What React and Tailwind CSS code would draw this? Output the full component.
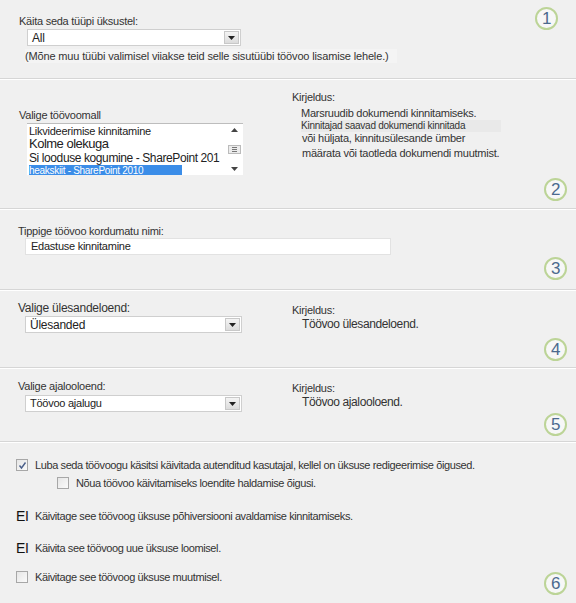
import React from 'react';

const font = { fontFamily: '"Liberation Sans", Arial, sans-serif' };

// numbered step marker
const Step = ({ n }) => (
    <div className="w-[23px] h-[23px] rounded-full border-2 border-[#bcd497] bg-[#f7f7f7] flex items-center justify-center text-[17px] leading-none text-[#4b6a8e]">
        {n}
    </div>
);

const DropArrow = () => (
    <div className="w-[15px] h-[13px] mr-[1px] border border-[#c8c8c8] bg-gradient-to-b from-[#f4f4f4] to-[#dcdcdc] flex items-center justify-center">
        <svg width="7" height="4" viewBox="0 0 7 4"><path d="M0 0h7L3.5 4z" fill="#222" /></svg>
    </div>
);

const Select = ({ children, className = "" }) => (
    <div className={`h-[17px] bg-white border border-[#cfcfcf] flex items-center justify-between ${className}`}>
        <div className="pl-[4px] text-[#222] leading-none">{children}</div>
        <DropArrow />
    </div>
);

const Box = ({ checked }) => (
    <div className="w-[12px] h-[12px] border border-[#a7a7a7] bg-gradient-to-br from-[#e6e6e6] to-[#fafafa] flex items-center justify-center shrink-0">
        {checked && (
            <svg width="9" height="9" viewBox="0 0 9 9"><path d="M1.5 4.5l2 2.5 4-5.5" stroke="#4a5f8a" strokeWidth="1.4" fill="none" /></svg>
        )}
    </div>
);

const App = () => {
    return (
        <div className="w-[576px] h-[603px] bg-[#f0f0f0] text-[11px] text-[#333] tracking-[-0.25px] overflow-hidden" style={font}>
            {/* 1 */}
            <div className="h-[79px] border-b border-[#d6d6d6] flex">
                <div className="flex-1 pl-[19px] pt-[14px]">
                    <div className="leading-[14px]">Käita seda tüüpi üksustel:</div>
                    <Select className="ml-[8px] w-[214px] mt-[1px] text-[12px]">All</Select>
                    <div className="ml-[6px] mt-[3px] leading-[14px] bg-[#f4f4f4] w-[372px] tracking-[-0.15px] whitespace-nowrap">(Mõne muu tüübi valimisel viiakse teid selle sisutüübi töövoo lisamise lehele.)</div>
                </div>
                <div className="pt-[7px] pr-[18px]"><Step n={1} /></div>
            </div>

            {/* 2 */}
            <div className="h-[130px] border-t border-white border-b border-b-[#d6d6d6] flex">
                <div className="w-[274px] pl-[19px] pt-[28px]">
                    <div className="leading-[14px]">Valige töövoomall</div>
                    <div className="ml-[8px] mt-[1px] w-[216px] h-[52px] bg-white border-t border-[#bdbdbd] flex">
                        <div className="flex-1 pl-[2px] pt-[1px] text-[#222] overflow-hidden whitespace-nowrap">
                            <div className="text-[11px] leading-[12px]">Likvideerimise kinnitamine</div>
                            <div className="text-[13px] leading-[14px] tracking-[-0.5px]">Kolme olekuga</div>
                            <div className="text-[12px] leading-[14px] tracking-[-0.4px]">Si looduse kogumine - SharePoint 201</div>
                            <div className="w-[153px] h-[12px] bg-[#3b8de8] text-white text-[10px] leading-[12px] tracking-[-0.3px]">heakskiit - SharePoint 2010</div>
                        </div>
                        <div className="w-[17px] flex flex-col items-center justify-between py-[4px]">
                            <svg width="7" height="4" viewBox="0 0 7 4"><path d="M3.5 0L7 4H0z" fill="#444" /></svg>
                            <div className="w-[13px] h-[9px] border border-[#bbb] bg-[#ececec] flex flex-col items-center justify-center gap-[1px]">
                                <div className="w-[5px] h-px bg-[#777]" />
                                <div className="w-[5px] h-px bg-[#777]" />
                                <div className="w-[5px] h-px bg-[#777]" />
                            </div>
                            <svg width="7" height="4" viewBox="0 0 7 4"><path d="M0 0h7L3.5 4z" fill="#444" /></svg>
                        </div>
                    </div>
                </div>
                <div className="flex-1 pt-[10px] pl-[18px]">
                    <div className="leading-[14px]">Kirjeldus:</div>
                    <div className="pl-[9px] mt-[2px] leading-[13px]">
                        <div className="text-[11px] leading-[14px]">Marsruudib dokumendi kinnitamiseks.</div>
                        <div className="text-[10px] leading-[12px] bg-[#e9e9e9] w-[200px]">Kinnitajad saavad dokumendi kinnitada</div>
                        <div className="text-[11px] leading-[13px] pl-[1px]">või hüljata, kinnitusülesande ümber</div>
                        <div className="text-[11px] leading-[14px] pl-[1px] mt-[1px]">määrata või taotleda dokumendi muutmist.</div>
                    </div>
                </div>
                <div className="flex items-end pb-[7px] pr-[9px]"><Step n={2} /></div>
            </div>

            {/* 3 */}
            <div className="h-[81px] border-t border-white border-b border-b-[#d6d6d6] flex">
                <div className="flex-1 pl-[18px] pt-[14px]">
                    <div className="leading-[14px]">Tippige töövoo kordumatu nimi:</div>
                    <div className="ml-[7px] w-[366px] h-[17px] bg-white border border-[#e2e2e2] pl-[5px] flex items-center text-[#222]">Edastuse kinnitamine</div>
                </div>
                <div className="flex items-end pb-[9px] pr-[9px]"><Step n={3} /></div>
            </div>

            {/* 4 */}
            <div className="h-[78px] border-t border-white border-b border-b-[#d6d6d6] flex">
                <div className="w-[274px] pl-[18px] pt-[10px]">
                    <div className="leading-[14px] text-[12px]">Valige ülesandeloend:</div>
                    <Select className="ml-[7px] w-[217px] mt-[1px] text-[12px]">Ülesanded</Select>
                </div>
                <div className="flex-1 pt-[12px] pl-[18px]">
                    <div className="leading-[14px]">Kirjeldus:</div>
                    <div className="pl-[10px] text-[12px] leading-[14px] tracking-[-0.4px]">Töövoo ülesandeloend.</div>
                </div>
                <div className="flex items-end pb-[6px] pr-[9px]"><Step n={4} /></div>
            </div>

            {/* 5 */}
            <div className="h-[74px] border-t border-white border-b border-b-[#d6d6d6] flex">
                <div className="w-[274px] pl-[18px] pt-[10px]">
                    <div className="leading-[14px]">Valige ajalooloend:</div>
                    <Select className="ml-[7px] w-[217px] mt-[2px] text-[11px]">
                        <span className="bg-white pr-[8px]">Töövoo ajalugu</span>
                    </Select>
                </div>
                <div className="flex-1 pt-[12px] pl-[18px]">
                    <div className="leading-[14px]">Kirjeldus:</div>
                    <div className="pl-[10px] text-[12px] leading-[14px] tracking-[-0.4px]">Töövoo ajalooloend.</div>
                </div>
                <div className="flex items-end pb-[5px] pr-[9px]"><Step n={5} /></div>
            </div>

            {/* 6 */}
            <div className="h-[160px] border-t border-white flex tracking-[-0.4px]">
                <div className="flex-1 pl-[16px] pt-[15px]">
                    <div className="flex items-center gap-[7px] h-[14px]">
                        <Box checked />
                        <span>Luba seda töövoogu käsitsi käivitada autenditud kasutajal, kellel on üksuse redigeerimise õigused.</span>
                    </div>
                    <div className="flex items-center gap-[7px] h-[14px] mt-[4px] ml-[41px]">
                        <Box />
                        <span>Nõua töövoo käivitamiseks loendite haldamise õigusi.</span>
                    </div>
                    <div className="flex items-center h-[16px] mt-[18px]">
                        <span className="w-[19px] text-[14px] text-[#111] leading-none">EI</span>
                        <span>Käivitage see töövoog üksuse põhiversiooni avaldamise kinnitamiseks.</span>
                    </div>
                    <div className="flex items-center h-[16px] mt-[16px]">
                        <span className="w-[19px] text-[14px] text-[#111] leading-none">EI</span>
                        <span>Käivita see töövoog uue üksuse loomisel.</span>
                    </div>
                    <div className="flex items-center gap-[7px] h-[14px] mt-[14px]">
                        <Box />
                        <span>Käivitage see töövoog üksuse muutmisel.</span>
                    </div>
                </div>
                <div className="flex items-end pb-[7px] pr-[9px]"><Step n={6} /></div>
            </div>
        </div>
    );
};

export default App;
